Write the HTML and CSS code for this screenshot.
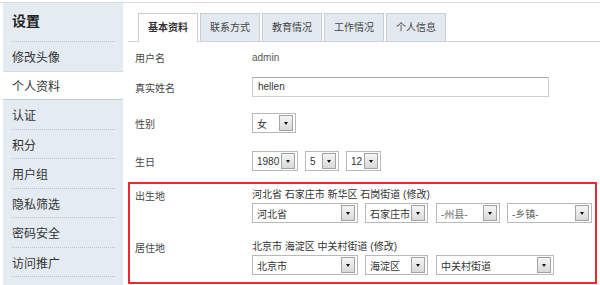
FILE: index.html
```html
<!DOCTYPE html>
<html lang="zh-CN">
<head>
<meta charset="utf-8">
<title>设置</title>
<link rel="stylesheet" href="styles.css">
</head>
<body>
<div class="page">
  <aside class="side">
    <div class="side-title">设置</div>
    <ul class="menu">
      <li class="item"><span class="item-in">修改头像</span></li>
      <li class="item active"><span class="item-in">个人资料</span></li>
      <li class="item"><span class="item-in">认证</span></li>
      <li class="item"><span class="item-in">积分</span></li>
      <li class="item"><span class="item-in">用户组</span></li>
      <li class="item"><span class="item-in">隐私筛选</span></li>
      <li class="item"><span class="item-in">密码安全</span></li>
      <li class="item"><span class="item-in">访问推广</span></li>
    </ul>
  </aside>
  <main class="main">
    <div class="tabs">
      <div class="tab active">基本资料</div>
      <div class="tab">联系方式</div>
      <div class="tab">教育情况</div>
      <div class="tab">工作情况</div>
      <div class="tab">个人信息</div>
    </div>
    <div class="form">
      <div class="row r1"><div class="label">用户名</div><div class="value plain">admin</div></div>
      <div class="row r2"><div class="label">真实姓名</div><div class="value"><div class="input">hellen</div></div></div>
      <div class="row r3"><div class="label">性别</div><div class="value">
        <div class="sel w44"><span class="sel-txt">女</span><span class="sel-btn"></span></div>
      </div></div>
      <div class="row r4"><div class="label">生日</div><div class="value sels">
        <div class="sel w46"><span class="sel-txt">1980</span><span class="sel-btn"></span></div>
        <div class="sel w34"><span class="sel-txt">5</span><span class="sel-btn"></span></div>
        <div class="sel w35"><span class="sel-txt">12</span><span class="sel-btn"></span></div>
      </div></div>
      <div class="region-box">
        <div class="arow">
          <div class="label">出生地</div>
          <div class="value">
            <div class="addr">河北省 石家庄市 新华区 石岗街道 (修改)</div>
            <div class="sels">
              <div class="sel w106"><span class="sel-txt">河北省</span><span class="sel-btn"></span></div>
              <div class="sel w63"><span class="sel-txt">石家庄市</span><span class="sel-btn"></span></div>
              <div class="sel w64 muted"><span class="sel-txt">-州县-</span><span class="sel-btn"></span></div>
              <div class="sel w85 muted"><span class="sel-txt">-乡镇-</span><span class="sel-btn"></span></div>
            </div>
          </div>
        </div>
        <div class="arow second">
          <div class="label">居住地</div>
          <div class="value">
            <div class="addr">北京市 海淀区 中关村街道 (修改)</div>
            <div class="sels">
              <div class="sel w106"><span class="sel-txt">北京市</span><span class="sel-btn"></span></div>
              <div class="sel w63"><span class="sel-txt">海淀区</span><span class="sel-btn"></span></div>
              <div class="sel w118"><span class="sel-txt">中关村街道</span><span class="sel-btn"></span></div>
            </div>
          </div>
        </div>
      </div>
    </div>
  </main>
</div>
</body>
</html>
```
FILE: styles.css
```css
* { box-sizing: border-box; }
html, body { margin: 0; padding: 0; background: #fff; }
body {
  font-family: "Liberation Sans", "Noto Sans CJK SC", sans-serif;
  font-size: 10px;
  color: #333;
  overflow: hidden;
}
.page {
  display: flex;
  margin-top: 2px;
  border-top: 1px solid #dcdcdc;
  height: 283px;
}
.side {
  width: 120px;
  margin-left: 3px;
  background: #e5ebf3;
  flex: none;
}
.side-title {
  margin: 0 8px 0 9px;
  height: 39px;
  line-height: 36px;
  font-size: 14px;
  font-weight: bold;
  color: #222;
  border-bottom: 1px dotted #b9c1cc;
}
.menu { list-style: none; margin: 0; padding: 0; }
.item { padding: 0 8px 0 9px; }
.item-in {
  display: block;
  height: 29.5px;
  line-height: 32px;
  font-size: 12px;
  color: #333;
  border-bottom: 1px dotted #b9c1cc;
}
.item.active {
  background: #fff;
  border-top: 1px solid #d6dbe1;
  border-bottom: 1px solid #c4c9cf;
  margin-top: -1px;
}
.item.active .item-in { border-bottom: none; height: 27.5px; line-height: 31px; }
.main {
  flex: 1;
  padding: 10px 0 0 5px;
}
.tabs {
  display: flex;
  gap: 2px;
  padding-left: 10px;
  border-bottom: 1px solid #cfd3d8;
  height: 29px;
}
.tab {
  width: 60px;
  height: 28px;
  line-height: 28px;
  text-align: center;
  font-size: 10px;
  color: #444;
  background: #e3e9f1;
  border: 1px solid #c9ced5;
  border-bottom: none;
}
.tab.active {
  background: #fff;
  height: 29px;
  font-weight: bold;
  color: #333;
}
.form { padding-right: 3px; }
.row {
  display: flex;
  align-items: center;
  padding-left: 7px;
}
.r1 { height: 30px; }
.r2 { height: 30px; }
.r3 { height: 42px; }
.r4 { height: 34px; }
.label { width: 117px; flex: none; color: #444; font-size: 10px; }
.plain { color: #555; }
.value { flex: 1; }
.input {
  width: 297px;
  height: 20px;
  line-height: 18px;
  padding-left: 5px;
  border: 1px solid #cfcfcf;
  border-top-color: #a8a8a8;
  color: #333;
}
.sels { display: flex; gap: 7px; }
.sel {
  display: inline-flex;
  align-items: center;
  height: 20px;
  border: 1px solid #b9b9b9;
  background: #fff;
  padding: 0 2px 0 4px;
  color: #333;
}
.sel-txt { flex: 1; white-space: nowrap; font-size: 10px; }
.muted .sel-txt { color: #666; }
.sel-btn {
  position: relative;
  width: 14px;
  height: 16px;
  border: 1px solid #a3a3a3;
  background: linear-gradient(#f5f5f5, #d9d9d9);
  flex: none;
}
.sel-btn::after {
  content: "";
  position: absolute;
  left: 3.5px;
  top: 6px;
  border-left: 2.5px solid transparent;
  border-right: 2.5px solid transparent;
  border-top: 3px solid #111;
}
.w44 { width: 44px; }
.w46 { width: 46px; }
.w34 { width: 34px; }
.w35 { width: 35px; }
.w106 { width: 106px; }
.w63 { width: 63px; }
.w64 { width: 64px; }
.w85 { width: 85px; }
.w118 { width: 118px; }
.w63 + .w64, .w63 + .w118 { margin-left: 1px; }
.region-box {
  margin-top: 4px;
  border: 2px solid #ea2a2f;
  padding: 4px 0 7px 5px;
  height: 102px;
}
.arow { display: flex; align-items: flex-start; }
.arow .label { line-height: 18px; }
.arow.second { margin-top: 17px; }
.addr { height: 15px; line-height: 14px; color: #333; white-space: nowrap; }
```
